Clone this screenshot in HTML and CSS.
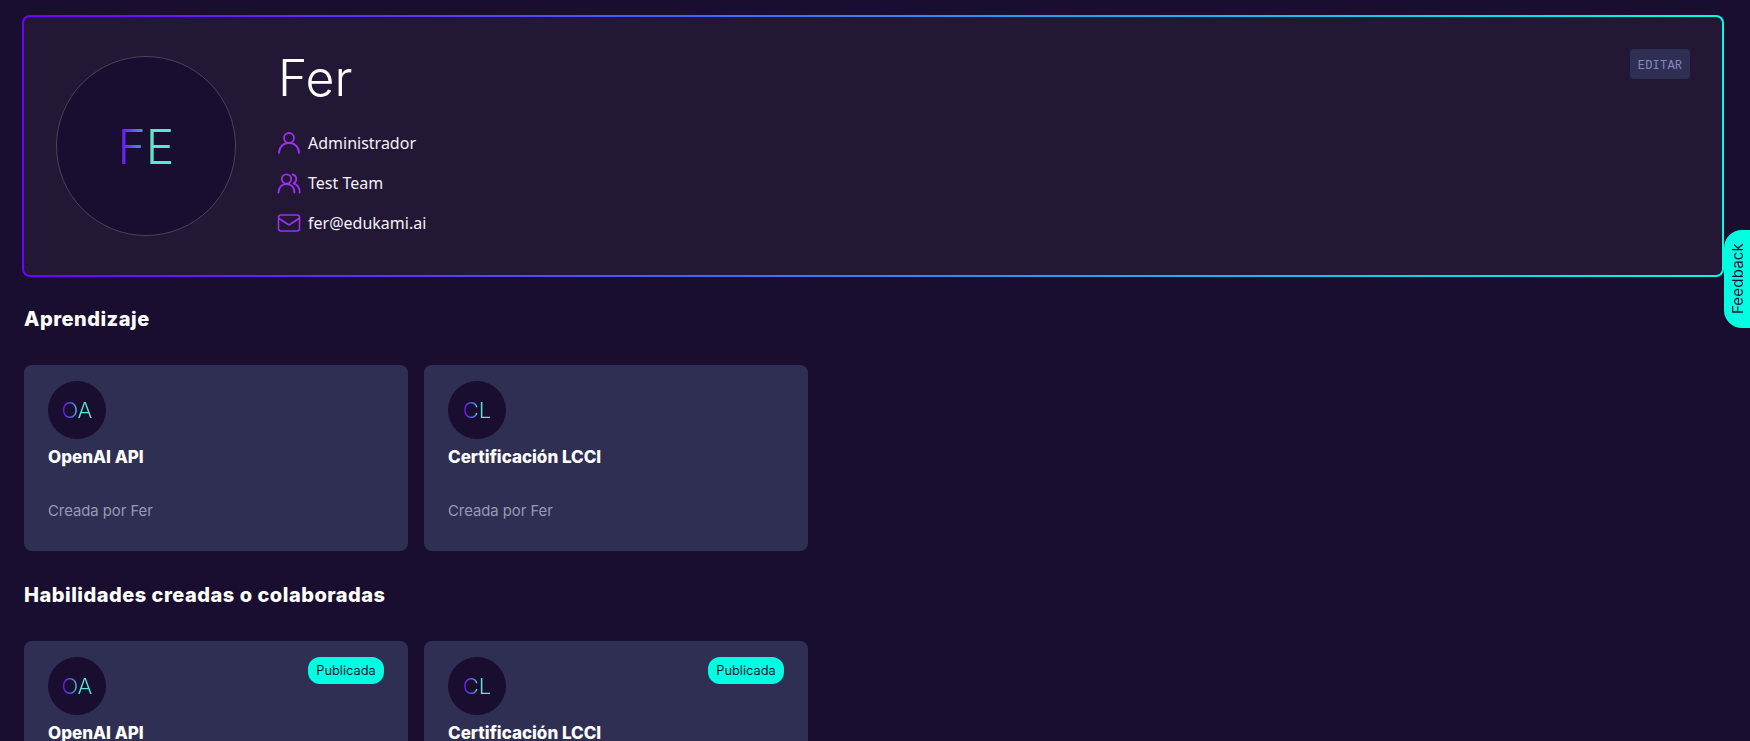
FILE: index.html
```html
<!DOCTYPE html>
<html lang="es">
<head>
<meta charset="utf-8">
<title>Perfil</title>
<link rel="stylesheet" href="styles.css">
</head>
<body>
<main class="page">
  <section class="profile">
    <div class="profile-avatar"><span class="grad">FE</span></div>
    <div class="profile-info">
      <h1 class="name">Fer</h1>
      <ul class="meta">
        <li class="meta-row">
          <svg class="meta-icon" viewBox="0 0 24 24" fill="none" stroke="currentColor" stroke-width="1.800" stroke-linecap="round" stroke-linejoin="round"><circle cx="12" cy="7" r="5"/><path d="M2 22c0-6 4.200-10 10-10s10 4 10 10"/></svg>
          <span>Administrador</span>
        </li>
        <li class="meta-row">
          <svg class="meta-icon" viewBox="0 0 24 24" fill="none" stroke="currentColor" stroke-width="1.800" stroke-linecap="round" stroke-linejoin="round"><circle cx="9.500" cy="8" r="4.700"/><path d="M1.500 21.500c0-5 3.200-8.500 8-8.500s8 3.500 8 8.500"/><path d="M15.500 3.500a4.700 4.700 0 0 1 1.200 8.800c3.800 1.200 6 4.500 6 9.200"/></svg>
          <span>Test Team</span>
        </li>
        <li class="meta-row">
          <svg class="meta-icon" viewBox="0 0 24 24" fill="none" stroke="currentColor" stroke-width="1.500" stroke-linecap="round" stroke-linejoin="round"><rect x="1.500" y="4" width="21" height="16" rx="2.500"/><path d="M2 7.500l10 6.500 10-6.500"/></svg>
          <span>fer@edukami.ai</span>
        </li>
      </ul>
    </div>
    <button class="edit" type="button">EDITAR</button>
  </section>

  <h2 class="section-title first">Aprendizaje</h2>
  <div class="cards">
    <article class="card">
      <div class="card-head"><div class="card-avatar"><span class="grad">OA</span></div></div>
      <h3 class="card-title">OpenAI API</h3>
      <p class="card-sub">Creada por Fer</p>
    </article>
    <article class="card">
      <div class="card-head"><div class="card-avatar"><span class="grad">CL</span></div></div>
      <h3 class="card-title">Certificación LCCI</h3>
      <p class="card-sub">Creada por Fer</p>
    </article>
  </div>

  <h2 class="section-title">Habilidades creadas o colaboradas</h2>
  <div class="cards">
    <article class="card">
      <div class="card-head"><div class="card-avatar"><span class="grad">OA</span></div><span class="badge">Publicada</span></div>
      <h3 class="card-title">OpenAI API</h3>
      <p class="card-sub">Creada por Fer</p>
    </article>
    <article class="card">
      <div class="card-head"><div class="card-avatar"><span class="grad">CL</span></div><span class="badge">Publicada</span></div>
      <h3 class="card-title">Certificación LCCI</h3>
      <p class="card-sub">Creada por Fer</p>
    </article>
  </div>
</main>
<button class="feedback" type="button"><span>Feedback</span></button>
</body>
</html>
```
FILE: styles.css
```css
* { box-sizing: border-box; }
html, body { height: 100%; }
body {
  margin: 0;
  background: #190e2f;
  color: #fff;
  font-family: Inter, "Liberation Sans", sans-serif;
  overflow: hidden;
}
.page { padding: 15px 26px 0 22px; }
.profile {
  display: flex;
  align-items: center;
  height: 262px;
  padding: 0 32px;
  border: 2px solid transparent;
  border-radius: 8px;
  background:
    linear-gradient(#221836, #221836) padding-box,
    linear-gradient(90deg, #7000ff 0%, #00ffe0 100%) border-box;
  position: relative;
}
.profile-avatar {
  width: 180px;
  height: 180px;
  flex: none;
  border-radius: 50%;
  background: #190e2f;
  border: 1px solid #4a4358;
  display: flex;
  align-items: center;
  justify-content: center;
  font-size: 48px;
  font-weight: 300;
}
.grad {
  background: linear-gradient(90deg, #7000ff 0%, #4b8fd8 42%, #5ce8d0 52%, #5ce8d0 100%);
  -webkit-background-clip: text;
  background-clip: text;
  color: transparent;
}
.profile-info {
  margin-left: 42px;
  align-self: flex-start;
  padding-top: 32px;
}
.name {
  margin: 0;
  font-size: 50px;
  font-weight: 300;
  line-height: 58px;
}
.meta {
  list-style: none;
  margin: 24px 0 0;
  padding: 0;
  display: flex;
  flex-direction: column;
  gap: 16px;
}
.meta-row {
  display: flex;
  align-items: center;
  gap: 7px;
  height: 24px;
  font-family: "Noto Sans", "Open Sans", sans-serif;
  font-size: 16px;
  color: #f3f1f8;
}
.meta-icon { width: 24px; height: 24px; color: #9b30f0; flex: none; margin-left: -1px; }
.edit {
  position: absolute;
  top: 32px;
  right: 32px;
  width: 60px;
  height: 30px;
  border: 0;
  border-radius: 4px;
  background: #2f2f54;
  color: #8586c0;
  font-family: "Liberation Mono", monospace;
  font-size: 12px;
  letter-spacing: 0.2px;
  padding: 3px 0 0;
}
.section-title {
  margin: 0;
  padding: 32px 2px 34px;
  font-size: 20px;
  font-weight: 800;
  line-height: 24px;
  letter-spacing: 0.5px;
}
.section-title.first { padding-top: 30px; }
.cards {
  display: grid;
  grid-template-columns: 384px 384px;
  gap: 16px;
  margin-left: 2px;
}
.card {
  height: 186px;
  padding: 16px 24px;
  border-radius: 8px;
  background: #2f2f54;
}
.card-head {
  display: flex;
  justify-content: space-between;
  align-items: flex-start;
}
.card-avatar {
  width: 58px;
  height: 58px;
  border-radius: 50%;
  background: #190e2f;
  display: flex;
  align-items: center;
  justify-content: center;
  font-size: 22px;
  font-weight: 300;
}
.card-title {
  margin: 6px 0 0;
  font-size: 17px;
  font-weight: 800;
  line-height: 24px;
}
.card-sub {
  margin: 32px 0 0;
  font-size: 14.8px;
  line-height: 20px;
  color: #9a99b3;
}
.badge {
  width: 76px;
  height: 27px;
  border-radius: 12px;
  background: #00ffe0;
  color: #14123a;
  font-size: 12.8px;
  display: flex;
  align-items: center;
  justify-content: center;
}
.feedback {
  position: fixed;
  right: 0;
  top: 230px;
  width: 26px;
  height: 98px;
  padding: 0;
  border: 0;
  border-radius: 18px 0 0 18px;
  background: #00ffe0;
  color: #14123a;
  font-family: Inter, sans-serif;
  font-size: 15px;
  letter-spacing: 0.2px;
  display: flex;
  align-items: center;
  justify-content: center;
}
.feedback span { writing-mode: vertical-rl; transform: rotate(180deg); }
```
